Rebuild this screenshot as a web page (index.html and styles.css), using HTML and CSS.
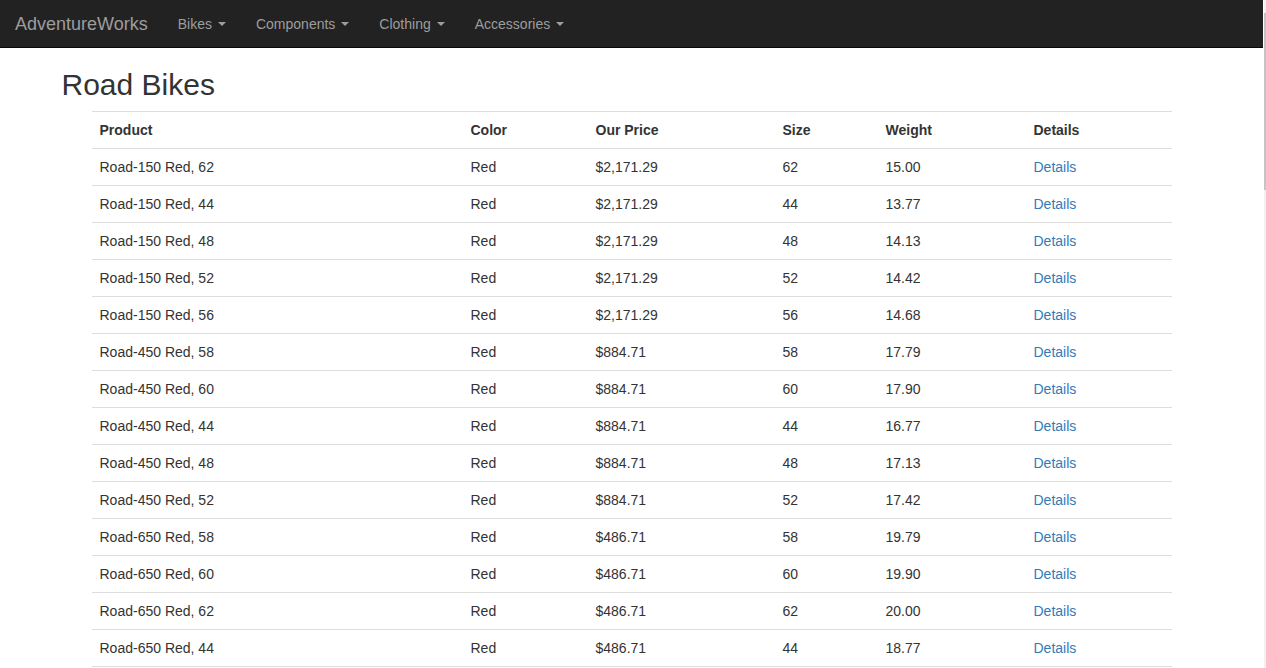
FILE: index.html
```html
<!DOCTYPE html>
<html>
<head>
<meta charset="utf-8">
<title>Road Bikes - AdventureWorks</title>
<link rel="stylesheet" href="styles.css">
</head>
<body>
<div class="page">
  <nav class="navbar">
    <a class="brand" href="#">AdventureWorks</a>
    <ul class="nav">
      <li><a href="#">Bikes <span class="caret"></span></a></li>
      <li><a href="#">Components <span class="caret"></span></a></li>
      <li><a href="#">Clothing <span class="caret"></span></a></li>
      <li><a href="#">Accessories <span class="caret"></span></a></li>
    </ul>
  </nav>
  <div class="container">
    <h2 class="title">Road Bikes</h2>
    <table class="table">
      <colgroup>
        <col class="c-product"><col class="c-color"><col class="c-price"><col class="c-size"><col class="c-weight"><col class="c-details">
      </colgroup>
      <tbody>
        <tr><th>Product</th><th>Color</th><th>Our Price</th><th>Size</th><th>Weight</th><th>Details</th></tr>
        <tr><td>Road-150 Red, 62</td><td>Red</td><td>$2,171.29</td><td>62</td><td>15.00</td><td><a href="#">Details</a></td></tr>
        <tr><td>Road-150 Red, 44</td><td>Red</td><td>$2,171.29</td><td>44</td><td>13.77</td><td><a href="#">Details</a></td></tr>
        <tr><td>Road-150 Red, 48</td><td>Red</td><td>$2,171.29</td><td>48</td><td>14.13</td><td><a href="#">Details</a></td></tr>
        <tr><td>Road-150 Red, 52</td><td>Red</td><td>$2,171.29</td><td>52</td><td>14.42</td><td><a href="#">Details</a></td></tr>
        <tr><td>Road-150 Red, 56</td><td>Red</td><td>$2,171.29</td><td>56</td><td>14.68</td><td><a href="#">Details</a></td></tr>
        <tr><td>Road-450 Red, 58</td><td>Red</td><td>$884.71</td><td>58</td><td>17.79</td><td><a href="#">Details</a></td></tr>
        <tr><td>Road-450 Red, 60</td><td>Red</td><td>$884.71</td><td>60</td><td>17.90</td><td><a href="#">Details</a></td></tr>
        <tr><td>Road-450 Red, 44</td><td>Red</td><td>$884.71</td><td>44</td><td>16.77</td><td><a href="#">Details</a></td></tr>
        <tr><td>Road-450 Red, 48</td><td>Red</td><td>$884.71</td><td>48</td><td>17.13</td><td><a href="#">Details</a></td></tr>
        <tr><td>Road-450 Red, 52</td><td>Red</td><td>$884.71</td><td>52</td><td>17.42</td><td><a href="#">Details</a></td></tr>
        <tr><td>Road-650 Red, 58</td><td>Red</td><td>$486.71</td><td>58</td><td>19.79</td><td><a href="#">Details</a></td></tr>
        <tr><td>Road-650 Red, 60</td><td>Red</td><td>$486.71</td><td>60</td><td>19.90</td><td><a href="#">Details</a></td></tr>
        <tr><td>Road-650 Red, 62</td><td>Red</td><td>$486.71</td><td>62</td><td>20.00</td><td><a href="#">Details</a></td></tr>
        <tr><td>Road-650 Red, 44</td><td>Red</td><td>$486.71</td><td>44</td><td>18.77</td><td><a href="#">Details</a></td></tr>
      </tbody>
    </table>
  </div>
</div>
<div class="scrollbar"><div class="track"><div class="thumb"></div></div></div>
</body>
</html>
```
FILE: styles.css
```css
html, body {
  margin: 0;
  height: 100%;
  overflow: hidden;
}
body {
  display: flex;
  font-family: "Liberation Sans", Arial, Helvetica, sans-serif;
  font-size: 14px;
  line-height: 20px;
  color: #333;
  background: #fff;
}
.page {
  flex: 1;
  min-width: 0;
}
.scrollbar {
  width: 3px;
  flex: none;
  background: #fff;
  display: flex;
}
.track {
  margin-left: 1px;
  flex: 1;
  background: #f1f1f1;
  padding-top: 13px;
}
.thumb {
  height: 177px;
  background: #c4c4c4;
}
.navbar {
  display: flex;
  align-items: stretch;
  height: 47px;
  background: #222;
  border-bottom: 1px solid #080808;
}
.brand {
  display: flex;
  align-items: center;
  padding: 0 15px;
  font-size: 18px;
  color: #9d9d9d;
  text-decoration: none;
}
.nav {
  display: flex;
  list-style: none;
  margin: 0;
  padding: 0;
}
.nav li {
  display: flex;
}
.nav a {
  display: flex;
  align-items: center;
  padding: 0 15px;
  color: #9d9d9d;
  text-decoration: none;
  font-size: 14px;
}
.caret {
  display: inline-block;
  width: 0;
  height: 0;
  margin-left: 6px;
  border-top: 4px solid #9d9d9d;
  border-left: 4px solid transparent;
  border-right: 4px solid transparent;
}
.container {
  width: 1170px;
  margin: 0 auto;
  padding: 0 15px;
  box-sizing: border-box;
}
.title {
  margin: 20px 0 10px;
  font-size: 30px;
  line-height: 33px;
  font-weight: 500;
  color: #333;
}
.table {
  margin-left: 30px;
  width: 1080px;
  border-collapse: collapse;
  border-spacing: 0;
  table-layout: fixed;
  border-bottom: 1px solid #ddd;
}
.c-product { width: 371px; }
.c-color { width: 125px; }
.c-price { width: 187px; }
.c-size { width: 103px; }
.c-weight { width: 148px; }
.c-details { width: 146px; }
.table th, .table td {
  padding: 8px;
  line-height: 20px;
  text-align: left;
  vertical-align: top;
  border-top: 1px solid #ddd;
}
.table th {
  font-weight: bold;
}
.table a {
  color: #337ab7;
  text-decoration: none;
}
```
